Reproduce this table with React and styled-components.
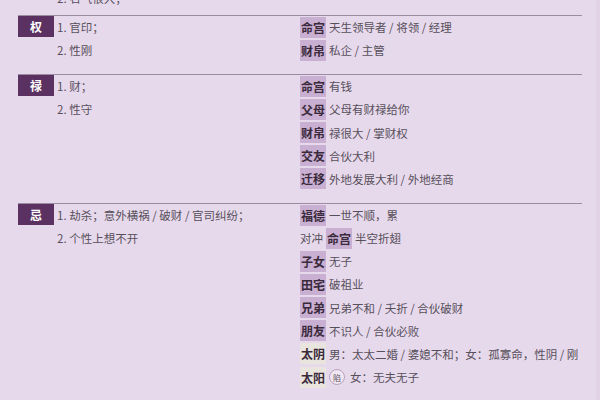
import React from "react";
import styled, { createGlobalStyle } from "styled-components";

const Global = createGlobalStyle`
  html, body { margin: 0; padding: 0; background: #e7d9ec; }
  body {
    font-family: "Noto Sans CJK SC", "Noto Sans", sans-serif;
    font-size: 11.5px;
    color: #57505b;
    overflow: hidden;
  }
`;

const Page = styled.div`
  width: 600px;
  height: 400px;
  overflow: hidden;
  background: #e7d9ec;
  border-right: 4px solid #e2d4e6;
  box-sizing: border-box;
`;

const Fragment = styled.div`
  margin-top: -13px;
  padding: 0 0 5px 57px;
  height: 23px;
  line-height: 23px;
`;

const Section = styled.section`
  display: flex;
  margin: 0 18px;
  width: 564px;
  border-top: 1px solid #9c8ba2;
  padding-bottom: 12px;
`;

const Left = styled.div`
  flex: 0 0 282px;
  display: flex;
  align-items: flex-start;
  gap: 3px;
`;

const Badge = styled.div`
  width: 36px;
  height: 21px;
  background: #5a3161;
  color: #fff;
  display: flex;
  align-items: center;
  justify-content: center;
  font-size: 12px;
  font-weight: 700;
`;

const List = styled.div`
  display: flex;
  flex-direction: column;
  min-width: 0;
`;

const Row = styled.div`
  height: 23.15px;
  display: flex;
  align-items: center;
  gap: 3px;
  white-space: nowrap;
  padding-bottom: 1px;
  box-sizing: border-box;
`;

const Label = styled.span`
  display: inline-flex;
  align-items: center;
  height: 21px;
  padding: 0 1px;
  background: ${(p) => (p.$pale ? "#e9e4dd" : "#c9afd2")};
  color: #3a2a3c;
  font-weight: 700;
  font-size: 12px;
`;

const Circle = styled.span`
  display: inline-flex;
  align-items: center;
  justify-content: center;
  width: 14px;
  height: 14px;
  border-radius: 50%;
  border: 1px solid #b7a2bd;
  background: #efe6f1;
  font-size: 8px;
  color: #5b4f60;
  margin-right: 2px;
`;

const sections = [
  {
    badge: "权",
    left: ["1. 官印；", "2. 性刚"],
    right: [
      { label: "命宫", text: "天生领导者 / 将领 / 经理" },
      { label: "财帛", text: "私企 / 主管" },
    ],
  },
  {
    badge: "禄",
    left: ["1. 财；", "2. 性守"],
    right: [
      { label: "命宫", text: "有钱" },
      { label: "父母", text: "父母有财禄给你" },
      { label: "财帛", text: "禄很大 / 掌财权" },
      { label: "交友", text: "合伙大利" },
      { label: "迁移", text: "外地发展大利 / 外地经商" },
    ],
  },
  {
    badge: "忌",
    left: ["1. 劫杀；意外横祸 / 破财 / 官司纠纷；", "2. 个性上想不开"],
    right: [
      { label: "福德", text: "一世不顺，累" },
      { pre: "对冲", label: "命宫", text: "半空折翅" },
      { label: "子女", text: "无子" },
      { label: "田宅", text: "破祖业" },
      { label: "兄弟", text: "兄弟不和 / 夭折 / 合伙破财" },
      { label: "朋友", text: "不识人 / 合伙必败" },
      { label: "太阴", pale: true, text: "男：太太二婚 / 婆媳不和；女：孤寡命，性阴 / 刚" },
      { label: "太阳", pale: true, mark: "陷", text: "女：无夫无子" },
    ],
  },
];

export default function App() {
  return (
    <Page>
      <Global />
      <Fragment>2. 名气很大；</Fragment>
      {sections.map((s) => (
        <Section key={s.badge}>
          <Left>
            <Badge>{s.badge}</Badge>
            <List>
              {s.left.map((t) => (
                <Row key={t}>{t}</Row>
              ))}
            </List>
          </Left>
          <List>
            {s.right.map((r, i) => (
              <Row key={i}>
                {r.pre && <span>{r.pre}</span>}
                <Label $pale={r.pale}>{r.label}</Label>
                {r.mark && <Circle>{r.mark}</Circle>}
                <span>{r.text}</span>
              </Row>
            ))}
          </List>
        </Section>
      ))}
    </Page>
  );
}
